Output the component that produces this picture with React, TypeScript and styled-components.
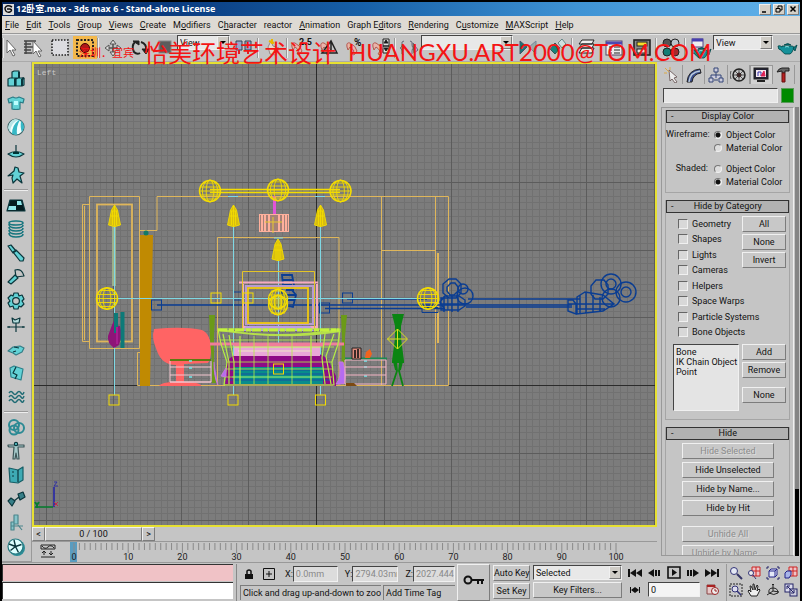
import React from 'react';
import styled, { createGlobalStyle, css } from 'styled-components';

const face = '#c5c5c5';
const dark = '#7c7c7c';
const light = '#f0f0f0';

const GlobalStyle = createGlobalStyle`
  * { box-sizing: border-box; }
  body { margin: 0; background: ${face}; }
  body, button, input, select {
    font-family: Roboto, "Liberation Sans", "Noto Sans CJK SC", sans-serif;
    font-size: 9px;
    line-height: 12px;
    color: #111;
  }
`;

const raised = css`
  border: 1px solid;
  border-color: ${light} ${dark} ${dark} ${light};
`;
const sunken = css`
  border: 1px solid;
  border-color: #444 ${light} ${light} #444;
`;

const Page = styled.div`
  position: relative;
  display: flex;
  flex-direction: column;
  min-height: 100vh;
  background: ${face};
  border: solid #000;
  border-width: 2px 2px 0;
  overflow: hidden;
`;
const TitleBar = styled.header`
  display: flex;
  align-items: center;
  gap: 2px;
  height: 14px;
  padding: 0 1px 0 1px;
  background: linear-gradient(90deg, #06265c 0%, #0a3c80 22%, #1760a8 45%, #3f93d4 72%, #62b2ea 100%);
`;
const Title = styled.h1`
  flex: 1;
  margin: 0;
  font: bold 9px/14px "Noto Sans", "Open Sans", "Noto Sans CJK SC", sans-serif;
  color: #fff;
  white-space: nowrap;
`;
const CaptionButton = styled.button`
  ${raised}
  width: 12px;
  height: 11px;
  padding: 0;
  display: grid;
  place-items: center;
  background: #d4d0c8;
`;
const MenuBar = styled.nav`
  display: flex;
  align-items: center;
  height: 17px;
  padding-left: 3px;
  gap: 7px;
  background: #dedad4;
`;
const MenuItem = styled.button`
  border: 0;
  padding: 0;
  background: none;
  white-space: nowrap;
  u { text-underline-offset: 1px; }
`;
const ToolBar = styled.div`
  display: flex;
  align-items: center;
  height: 29px;
  border-top: 1px solid #999;
  border-bottom: 1px solid #aaa;
  box-shadow: inset 0 1px #e4e4e4;
`;
const Tool = styled.button<{ $w?: number; $on?: boolean }>`
  flex: none;
  width: ${p => p.$w ?? 27}px;
  height: 23px;
  padding: 0;
  border: 0;
  display: grid;
  place-items: center;
  background: ${p => (p.$on ? '#f3b84c' : 'none')};
  svg { display: block; overflow: visible; }
`;
const Rule = styled.span<{ $wide?: boolean }>`
  flex: none;
  width: ${p => (p.$wide ? 'auto' : '2px')};
  height: ${p => (p.$wide ? '2px' : '20px')};
  margin: ${p => (p.$wide ? '2px 2px' : '0')};
  border: solid #999;
  border-width: ${p => (p.$wide ? '1px 0 0' : '0 0 0 1px')};
  box-shadow: ${p => (p.$wide ? 'inset 0 1px #eee' : 'inset 1px 0 #eee')};
`;
const Drop = styled.span<{ $w: number }>`
  position: relative;
  flex: none;
  display: block;
  width: ${p => p.$w}px;
  select {
    ${sunken}
    display: block;
    appearance: none;
    width: 100%;
    height: 15px;
    padding: 0 14px 0 2px;
    border-radius: 0;
    background: #e8e8e8;
  }
  svg {
    ${raised}
    position: absolute;
    right: 1px;
    top: 1px;
    width: 12px;
    height: 13px;
    background: #cfccc6;
    pointer-events: none;
  }
`;
const ToolDrop = styled(Drop)`
  align-self: flex-start;
  margin-top: 1px;
`;
const Spacer = styled.span`flex: 1;`;
const Body = styled.div`
  flex: 1;
  min-height: 0;
  display: grid;
  grid-template-columns: 30px minmax(0, 1fr) 143px;
`;
const SideTools = styled.aside`
  display: flex;
  flex-direction: column;
  padding: 5px 1px 0 0;
  border: solid #999;
  border-width: 0 1px 1px 0;
`;
const SideTool = styled.button`
  height: 24px;
  border: 0;
  padding: 0;
  background: none;
  display: grid;
  place-items: center;
`;
const Center = styled.main`
  display: flex;
  flex-direction: column;
  min-width: 0;
`;
const Viewport = styled.section`
  position: relative;
  flex: 1;
  min-height: 0;
  border: 2px solid #e6e032;
  background: #7c7c7c;
  svg { display: block; width: 100%; height: 461px; min-height: 100%; }
`;
const ViewLabel = styled.span`
  position: absolute;
  left: 3px;
  top: 3px;
  font: 8px/11px "Liberation Mono", monospace;
  color: #c9c9c9;
`;
const TimeSlider = styled.div`
  display: flex;
  height: 15px;
  border-bottom: 1px solid #999;
`;
const SliderButton = styled.button<{ $w: number }>`
  ${raised}
  width: ${p => p.$w}px;
  padding: 0;
  background: ${face};
`;
const Track = styled.div`
  display: flex;
  height: 20px;
  padding-right: 41px;
`;
const TrackIcon = styled.button`
  flex: none;
  width: 42px;
  padding: 0 10px 0 0;
  border: 0;
  background: none;
`;
const Ticks = styled.svg`
  flex: 1;
  min-width: 0;
  height: 20px;
  overflow: visible;
  text { font-size: 9px; text-anchor: middle; fill: #222; }
`;

const CommandPanel = styled.aside`
  display: flex;
  flex-direction: column;
  padding: 3px 1px 0 4px;
  min-height: 0;
`;
const Tabs = styled.div`
  display: flex;
  height: 19px;
  padding-right: 4px;
`;
const Tab = styled.button<{ $on?: boolean }>`
  flex: 1;
  padding: 0;
  border: solid #999;
  border-width: ${p => (p.$on ? '1px 1px 0' : '0 1px 0 0')};
  background: ${p => (p.$on ? '#d2d2d2' : 'none')};
  display: grid;
  place-items: center;
`;
const NameRow = styled.div`
  display: flex;
  gap: 3px;
  padding: 4px 5px 4px 2px;
  input { ${sunken} flex: 1; min-width: 0; height: 15px; background: #e6e6e6; }
`;
const Swatch = styled.button`
  width: 13px;
  height: 15px;
  padding: 0;
  border: 1px solid #5a9a5a;
  background: #008a00;
`;
const Scroller = styled.div`
  display: flex;
  gap: 1px;
  height: 449px;
  overflow: hidden;
`;
const Rollouts = styled.div`
  flex: 1;
  padding: 2px 3px 0;
  border: solid #999;
  border-width: 1px;
  border-right-color: ${light};
  overflow: hidden;
`;
const Thumb = styled.div`
  width: 4px;
  background: linear-gradient(#858585 0 85%, #000 85%);
`;
const Rollout = styled.section<{ $h: number }>`
  min-height: ${p => p.$h}px;
  margin-bottom: 7px;
  border: solid #a5a5a5;
  border-width: 0 1px 1px;
`;
const RolloutTitle = styled.button`
  display: flex;
  width: 100%;
  height: 13px;
  padding: 0 4px;
  border: 1px solid #333;
  background: #b2b2b2;
  line-height: 11px;
  b { flex: 1; font-weight: normal; padding-right: 2px; }
`;
const RadioGroup = styled.fieldset`
  display: grid;
  grid-template-columns: 42px 1fr;
  column-gap: 6px;
  margin: 0;
  padding: 5px 0 0;
  border: 0;
  & + & { padding-top: 8px; }
  > span { text-align: right; line-height: 13px; }
  > div { display: grid; }
`;
const Option = styled.label`
  display: flex;
  align-items: center;
  gap: 4px;
  height: 13px;
  white-space: nowrap;
  input {
    appearance: none;
    flex: none;
    width: 8px;
    height: 8px;
    margin: 0;
    border-radius: 50%;
    ${sunken}
    border-color: #777 ${light} ${light} #777;
    background: #ddd;
  }
  input:checked { background: radial-gradient(#111 0 2px, #ddd 3px); }
`;
const Split = styled.div`
  display: flex;
  justify-content: space-between;
  padding: 3px 3px 0 12px;
`;
const Checks = styled.div`
  display: flex;
  flex-direction: column;
  justify-content: space-between;
  height: 122px;
  padding-top: 2px;
`;
const Check = styled.label`
  display: flex;
  align-items: center;
  gap: 4px;
  height: 12px;
  white-space: nowrap;
  input {
    appearance: none;
    width: 10px;
    height: 10px;
    margin: 0;
    ${sunken}
    border-color: #666 ${light} ${light} #666;
    background: #d8d8d8;
  }
`;
const SideButtons = styled.div`
  display: flex;
  flex-direction: column;
  gap: 2px;
  width: 44px;
  margin-left: -44px;
`;
const PushButton = styled.button<{ $gapBefore?: number }>`
  ${raised}
  width: 100%;
  height: 16px;
  flex: none;
  padding: 0;
  margin-top: ${p => p.$gapBefore ?? 0}px;
  background: #c8c8c8;
  line-height: 13px;
  white-space: nowrap;
  &:disabled { color: #8c8c8c; text-shadow: 1px 1px #ddd; }
`;
const ListRow = styled.div`
  display: flex;
  justify-content: space-between;
  padding: 6px 3px 0 7px;
`;
const ListBox = styled.ul`
  ${sunken}
  width: 66px;
  height: 67px;
  margin: 0;
  padding: 2px 0 0 2px;
  list-style: none;
  line-height: 10px;
  background: #e4e4e4;
  white-space: nowrap;
`;
const HideButtons = styled.div`
  display: flex;
  flex-direction: column;
  gap: 3px;
  padding: 3px 15px 0 16px;
`;

const Bottom = styled.footer`
  display: flex;
  height: 39px;
  padding: 1px 0 0;
  gap: 3px;
  border-top: 1px solid #999;
`;
const Listener = styled.div`
  flex: 1;
  min-width: 100px;
  display: grid;
  grid-template-rows: 17px 17px;
  gap: 1px;
  padding-right: 3px;
  border-right: 1px solid #888;
`;
const ListenerLine = styled.input<{ $bg: string }>`
  border: solid #333;
  border-width: 1px 0 0 1px;
  width: 100%;
  min-width: 0;
  background: ${p => p.$bg};
`;
const Status = styled.div`
  width: 214px;
  display: grid;
  grid-template-rows: 19px 16px;
  gap: 1px;
`;
const StatusRow = styled.div`
  display: flex;
  align-items: center;
  gap: 2px;
`;
const Coord = styled.label<{ $w: number }>`
  display: flex;
  align-items: center;
  margin-left: auto;
  input { ${sunken} width: ${p => p.$w}px; height: 16px; padding: 0 0 0 2px; background: #dcdcdc; color: #888; }
`;
const StatusCell = styled.div<{ $w?: number }>`
  flex: ${p => (p.$w ? 'none' : '1')};
  width: ${p => (p.$w ? p.$w + 'px' : 'auto')};
  height: 15px;
  padding-left: 2px;
  border: solid ${dark};
  border-width: 1px 0 0 1px;
  overflow: hidden;
  white-space: nowrap;
  line-height: 15px;
`;
const KeyButton = styled.button`
  ${raised}
  width: 33px;
  padding: 0;
  background: ${face};
`;
const KeyCol = styled.div<{ $w: number }>`
  width: ${p => p.$w}px;
  display: flex;
  flex-direction: column;
  gap: 2px;
  padding-top: 1px;
`;
const Playback = styled.div`
  width: 98px;
  display: grid;
  grid-template-rows: 17px 17px;
  padding: 0 4px 0 3px;
`;
const PlayRow = styled.div`
  display: flex;
  align-items: center;
  justify-content: space-between;
  input { ${sunken} width: 52px; height: 15px; background: #f4f4f4; }
`;
const NavGrid = styled.div`
  width: 74px;
  display: grid;
  grid-template-columns: repeat(4, 1fr);
  grid-template-rows: 17px 17px;
  border-left: 1px solid #999;
`;
const IconButton = styled.button`
  border: 0;
  padding: 0;
  background: none;
  display: grid;
  place-items: center;
`;
const Watermark = styled.div`
  position: absolute;
  left: 77px;
  top: 36px;
  display: flex;
  align-items: center;
  color: #f41414;
  white-space: nowrap;
  pointer-events: none;
  font: 24px/28px "Noto Sans CJK SC", sans-serif;
  small { width: 65px; font-size: 11px; }
  span { width: 204px; }
  em { font: 24px/26px Lato, "Liberation Sans", sans-serif; }
`;

/* ---------- icons ---------- */
const C = '#62d2d6';
const K = '#0b363c';
const Ico = ({ children, s = 20, w }: { children: React.ReactNode; s?: number; w?: number }) => (
  <svg width={w ?? s} height={s} viewBox={`0 0 ${w ?? s} ${s}`} fill="none" stroke="#222" strokeWidth="1" aria-hidden="true">{children}</svg>
);
const Teal = ({ children }: { children: React.ReactNode }) => (
  <svg width="20" height="20" viewBox="0 0 20 20" fill={C} stroke={K} strokeWidth="1.2" strokeLinejoin="round" aria-hidden="true">{children}</svg>
);

const sideGroups: [string, React.ReactNode][][] = [
  [
    ['Rigid bodies', <Teal><path d="M6 3l2-1h5v7H6zM2 10l2-1h5v8H2zM10 10l2-1h6v7l-2 1h-6z" /><path d="M13 3v6M9 10v7M16 10l2-1M16 10v7" strokeWidth="2" /></Teal>],
    ['Cloth', <Teal><path d="M2 6l5-2q3 2 6 0l5 2-1 4-3-1v7q-4 1-8 0V9l-3 1z" stroke="#2a7c86" /><path d="M8 8h4v4H8z" fill="#bff" stroke="none" /></Teal>],
    ['Soft body', <Teal><circle cx="10" cy="10" r="8" fill="#f2ffff" stroke="#3a6468" /><path d="M13 3Q5 5 4 15l-2-4Q3 4 9 2z" fill="#b8e4e6" stroke="none" /><path d="M13 3Q6 8 6 17l5 1Q10 9 14 3zM15 4q-1 7 1 11l2-4q0-5-3-7z" fill="#36b8c6" stroke="none" /></Teal>],
    ['Rope', <Teal><path d="M2 13q8-5 16 0-8 6-16 0zM10 4v8" /><path d="M7 12h6" stroke="#033" strokeWidth="2" /></Teal>],
    ['Deforming mesh', <Teal><path d="M9 2l3 1 1 4 5 1-4 3 2 7-5-4-4 4-1-5 1-3-5 1 6-5z" /></Teal>],
  ],
  [
    ['Plane', <Teal><path d="M4 5h12l3 11H1z" fill="#041c20" /><path d="M11 6h4l1 4h-5zM3 11h7v4H2z" stroke="none" fill="#8fe6ea" /></Teal>],
    ['Spring', <Teal><g fill="none" stroke="#16757e" strokeWidth="1.6"><ellipse cx="10" cy="4" rx="7" ry="2" /><path d="M3 5q0 4 7 4t7-3M3 8q0 4 7 4t7-3M3 11q0 4 7 4t7-3M3 14q0 4 7 4t7-3" /></g></Teal>],
    ['Linear dashpot', <Teal><path d="M2 3l3-1 5 6-3 2zM7 9l3-2 8 8-1 3-3 0z" /></Teal>],
    ['Angular dashpot', <Teal><path d="M9 3q7-2 9 6l-8 1z" fill="none" /><path d="M2 15l7-7 3 3-7 6z" /></Teal>],
    ['Motor', <Teal><path d="M8 2h4l1 3 3-1 2 4-2 2 2 3-3 3-2-1-1 3H8l-1-3-3 1-2-4 2-2-2-3 3-3 2 1z" /><circle cx="10" cy="10" r="3.4" fill="#c5c5c5" /></Teal>],
    ['Wind', <Teal><path d="M1 12h18M10 8v9M3 11v2M17 11v2" fill="none" /><path d="M6 3l3 2 5-2-1 5H7z" fill="#b4dcdc" /></Teal>],
    ['Toy car', <Teal><path d="M2 12l5-4 7-1 4 2-2 4-6 3-3-2z" stroke="#357d86" /><path d="M8 8l5 1M7 13l3-1" /></Teal>],
    ['Fracture', <Teal><path d="M4 5l4-2 9 3-2 11-10-3z" stroke="#2c808a" /><path d="M10 4l-3 6 4 2-2 4" fill="none" /></Teal>],
    ['Water', <Teal><path d="M3 6q2-3 4 0t4 0 4 0 3-1M3 10q2-3 4 0t4 0 4 0 3-1M3 14q2-3 4 0t4 0 4 0 3-1" fill="none" stroke="#1f6b74" strokeWidth="1.4" /></Teal>],
  ],
  [
    ['Constraint', <Teal><g fill="none" stroke="#2c8a94" strokeWidth="2"><circle cx="8" cy="8" r="5" /><circle cx="13" cy="11" r="5" /><circle cx="8" cy="13" r="4.5" /></g></Teal>],
    ['Rag doll', <Teal><path d="M2 5V4h16v2h-6l1 12h-2l-1-6-1 6H7L8 6H3z" fill="#a4c8c8" stroke="#3d5558" /><circle cx="10" cy="3" r="1.6" /></Teal>],
    ['Hinge', <Teal><path d="M3 3l9 2 5-3v13l-5 3-8-1z" fill="#3eaab4" stroke="#175e66" /><path d="M12 5v12M6 7h2M6 11h2" /></Teal>],
    ['Point-point', <Teal><path d="M2 12l3-3 4 3-3 5zM12 5l5-2 2 5-5 3zM8 12l5-4" fill="#377f88" /></Teal>],
    ['Prismatic', <Teal><path d="M8 2h4v9H8zM5 9h3v8H5zM5 13h12M12 12l4 5" fill="#87c4ca" stroke="#4c868c" /></Teal>],
    ['Car wheel', <Teal><circle cx="11" cy="11" r="8" stroke="none" fill="#2a8c96" /><circle cx="9.500" cy="9.500" r="7.500" fill="#dff" stroke="#2a7a82" /><path d="M9.500 9.500L8 3M9.500 9.500l6-2M9.500 9.500l3 6M9.500 9.500l-5 4M9.500 9.500L3 7" strokeWidth="1.400" /></Teal>],
  ],
];

const Cursor = ({ x = 0, fill = '#fff' }: { x?: number; fill?: string }) => <path transform={`translate(${x} 0)`} d="M1 2v13l3-3 3 6 2-1-3-5h4z" fill={fill} stroke="#666" />;
const Magnet = () => <path d="M2 9q-1-5 3-4 6 3 7 8l-3 4-2-1 2-3q-2-3-4-4l-2 3z" fill="#e9b4ac" stroke="#b45a50" />;
const Pot = ({ y = 0, x = 0 }: { y?: number; x?: number }) => (
  <g transform={`translate(${x} ${y})`} stroke="#044" strokeWidth="0.8">
    <path d="M4 6h10q4 1 1 4-1 3-3 4H7Q4 12 3 10q-3 0-3-4 2-1 4 1z" fill="#16919a" /><path d="M15 8l4-3-2 6zM6 5q4-3 7 0z" fill="#0d7a84" /><path d="M7 7q2-1 4 0" stroke="#aff" />
  </g>
);
const Arrow = () => <svg viewBox="0 0 10 11"><path d="M2 4h6L5 7z" fill="#000" /></svg>;

/* ---------- viewport drawing ---------- */
const Y = '#f4dc00';
const TAN = '#dfb65a';
const BLUE = '#0a3d92';
const minorX = Array.from({ length: 140 }, (_, i) => i - 60);
const minorY = Array.from({ length: 90 }, (_, i) => i - 55);

const Ball = ({ x, y, r = 11 }: { x: number; y: number; r?: number }) => (
  <g stroke={Y} fill="none" strokeWidth="0.9">
    <circle cx={x} cy={y} r={r - 0.5} strokeWidth="1.5" />
    <ellipse cx={x} cy={y} rx={r * 0.35} ry={r} /><ellipse cx={x} cy={y} rx={r * 0.7} ry={r} />
    <path d={`M${x - r} ${y}h${2 * r}M${x - r + 1} ${y - 4}h${2 * r - 2}M${x - r + 1} ${y + 4}h${2 * r - 2}M${x - 7} ${y - 8}h14M${x - 7} ${y + 8}h14`} />
  </g>
);
const Cone = ({ x, y }: { x: number; y: number }) => (
  <path d={`M${x} ${y}l-3 5-3 15q6 3 12 0l-3-15zM${x} ${y}v22M${x - 3} ${y + 6}h6M${x - 4} ${y + 11}h8M${x - 2} ${y + 6}v14M${x + 2} ${y + 6}v14`} fill="#d8bd10" stroke={Y} strokeWidth="0.9" />
);
const Box = ({ x, y, c = Y, s = 5 }: { x: number; y: number; c?: string; s?: number }) => <rect x={x - s} y={y - s} width={2 * s} height={2 * s} fill="none" stroke={c} />;

const Scene = () => (
  <svg viewBox="34 64 621 461" preserveAspectRatio="xMidYMid slice" fill="none" role="img" aria-label="Left wireframe view of a bedroom">
    <g stroke="#717171" shapeRendering="crispEdges">
      {minorX.map(i => <path key={i} d={`M${316.5 + i * 6.76} -100v900`} />)}
      {minorY.map(i => <path key={i} d={`M-100 ${385.5 + i * 6.76}h1100`} />)}
    </g>
    <g stroke="#5c5c5c" shapeRendering="crispEdges">
      {[-6, -5, -4, -3, -2, -1, 1, 2, 3, 4, 5, 6, 7].map(i => <path key={i} d={`M${316.5 + i * 67.6} -100v900`} />)}
      {[-6, -5, -4, -3, -2, -1, 1, 2, 3].map(i => <path key={i} d={`M-100 ${385.5 + i * 67.6}h1100`} />)}
    </g>
    <path d="M316.500-100v900M-100 385.500h1100" stroke="#2b2b2b" shapeRendering="crispEdges" />

    <g stroke={TAN}>
      <path d="M89.500 348.500v-152h50v152zM89.500 204.500h-7v137h7M84.500 206v134" />
      <rect x="97" y="204.500" width="35" height="137" strokeWidth="1.800" />
      <path d="M139.500 230.500h17.500v-34h291.500v189h-311v-33h3M381.500 196.500v189M435.500 196.500v189M381.500 250.500h54" />
      <path d="M438 253v90" strokeWidth="2" />
      <path d="M217.500 385v-147.500h121.500v148" />
    </g>
    <path d="M238.500 328v-88.500h77" stroke="#666" />
    <path d="M140 235h13l-3 151h-10z" fill="#c08a02" />
    <circle cx="146" cy="233" r="2.500" fill="#137a66" />
    <path d="M112 226h4v60h-4z" fill="#9db08a" />

    <g stroke={BLUE}>
      <path d="M157 305h415M347 299h80M468 299h112M325 308.500h120M466 307h106" strokeWidth="1.600" />
      <Box x={156.500} y={305} c={BLUE} /><Box x={324.500} y={308} c={BLUE} /><Box x={347.500} y={298} c={BLUE} />
      <path d="M422 307.500h16v5h-16zM233 292h8M233 300h8" />
      <path d="M282 275h10l2 10-3 4 5 6-3 12-8-2-4-14 2-6zM282 280h11M284 285h8M286 290h8M284 295h12M285 300h10" strokeWidth="1.800" />
      <g strokeWidth="1.400">
        <path d="M449 279h7l5 5v9l-5 5h-7l-6-5v-9zM451 283h4l3 4v4l-4 4h-4l-3-4v-4z" />
        <circle cx="465" cy="296" r="8" /><circle cx="463" cy="289" r="5" />
        <path d="M440 302l5-6h14l6 4v6l-6 4h-14zM441 298h7v12h-7zM444 296v16M452 296v16M458 297v15M440 304h26" />
      </g>
      <g strokeWidth="1.400">
        <path d="M591 286l5-6h8l4 5v9l-5 5h-8l-4-5z" /><circle cx="611" cy="284" r="10" /><circle cx="611" cy="284" r="5" /><circle cx="626" cy="292" r="10" /><circle cx="626" cy="292" r="5" /><circle cx="611" cy="298" r="9" />
        <path d="M568 300h5l3 4v10l-8-3zM577 297l8-5 18 3 11 9-11 7-26 3zM580 295v19M586 293v20M593 295v17M600 297v14M568 304h46M577 309h28" />
      </g>
    </g>
    <path d="M107 298.500h321M114.500 226v169M233.500 226v169M320.500 226v169M278.500 261v108M228 196.500h10M315 196.500h10M274 238h9" stroke="#7fd8e4" />

    <path d="M112 325q2-3 3-9l1 9 4 1 2 9-3 10-5 3q-7-5-6-12z" fill="#8e1478" />
    <path d="M116 313v20M122.500 312v36" stroke="#0c7a78" strokeWidth="4" />
    <path d="M117 327v17" stroke="#a81c90" strokeWidth="2" />
    <path d="M154 329q30-3 48 1 9 4 9 20 0 9-3 13l-24 1v18q14 0 17 3v1h-42q2-4 17-4v-17q-14 0-19-14-6-14-3-21z" fill="#ff6464" />
    <path d="M170 360h41" stroke="#5f7a10" strokeWidth="2" />
    <path d="M170 361v21h41v-21M170 367h41M170 375h41M170 382h41" stroke="#f3c6cf" />
    <g stroke="#6ee6ea" strokeWidth="1.500"><path d="M189 361h3M189 368h3M189 377h3M364 361h3M364 367h3M364 376h3" /></g>
    <path d="M209 315h6l-1 22v28l2 18h-4v-20l-2-24zM341 315h6l-2 22v28l-1 20h-3l1-46z" fill="#6b9a18" />

    <g stroke="#f4aabf">
      <path d="M239 282.500h79M243 284v44h74v-44M242 327h76" strokeWidth="2" /><path d="M246 286v38h67v-38z" stroke="#b79bd0" strokeWidth="2" />
    </g>
    <path d="M242.500 330v-58.500h72v58" stroke="#e4c428" />
    <rect x="248" y="288" width="60" height="35" stroke="#f0c810" strokeWidth="1.800" />
    <path d="M246 326h64l4 5h-72z" fill="#bd9de8" />

    <path d="M227 362q4-7 12-8h80q8 2 11 10l6 12v10H225z" fill="#8e0a86" />
    <path d="M234 343h86v13h-86z" fill="#e9a7d8" /><path d="M234 347h86M238 351h74" stroke="#f0e8c8" />
    <path d="M210 344h134M234 345h90" stroke="#f07d9b" strokeWidth="3" />
    <path d="M234 367h89v17h-89z" fill="#088c8c" /><path d="M231 370h94M233 374h90M228 380h102" stroke="#1b4fa0" /><path d="M232 377h90" stroke="#26c4b4" />
    <path d="M222 329q55 10 116 0l3 3q-56 9-122-1z" fill="#b6e04a" />
    <g stroke="#b4ee44">
      <path d="M218 329h122l-2 15-6 18 2 23H224l3-23-6-18zM223 334l6 28v22M229 335l5 27v22M240 336v48M311 336v48M325 334l-3 24 3 26M334 334l-8 22 5 28" strokeWidth="1.200" />
      <path d="M220 340h118M222 347h112M226 362h106M225 369h107M225 377h107M225 385h108M254 336v48M268 336v48M292 336v48" strokeWidth="0.800" />
    </g>
    <path d="M218 330h121" stroke="#c4f23c" strokeWidth="3" strokeDasharray="9 2 5 1" />
    <path d="M336 384q6-6 3-22h4q4 14 1 22zM221 376l5-8v9zM214 362q0 16 4 23" fill="#b56cf0" stroke="#c87ad8" />

    <path d="M345 358.500h42" stroke="#1b8a50" strokeWidth="2" /><path d="M345 360v24h41v-24zM345 367h41M345 375h41" stroke="#f3b4c4" />
    <path d="M352 348h9v11h-9z" fill="#e08b7c" stroke="#222" /><path d="M355 350v8M358 349v9" stroke="#111" strokeWidth="1.600" />
    <path d="M365 358l1-6 4-3 2 5-2 4z" fill="#f0641e" /><path d="M346 383h8l3 3h-11z" fill="#7c4a12" />
    <path d="M392 314h12l-3 12v12l3 23v2h-12v-2l3-23v-12z" fill="#0a8512" />
    <path d="M396 362l1 9-5 15M400 362l-1 9 4 15M394 362l2 8M402 362l-2 8" stroke="#0a8512" strokeWidth="1.800" />
    <path d="M397.500 329l10 10-10 10-10-10zM387 339h20M397.500 329v20" stroke="#dce01e" />

    <path d="M274.500 196v18" stroke="#e254d8" strokeWidth="3" />
    <rect x="259.500" y="214.500" width="29" height="17" fill="#a58178" stroke="#ffb09c" />
    <path d="M262 214v18M265 214v18M269 214v18M279 214v18M283 214v18M286 214v18" stroke="#ffb09c" strokeWidth="2" /><path d="M265 222h17M273 217v16" stroke="#e7c830" />

    <path d="M210 189.500h130M210 192.500h130" stroke={Y} strokeWidth="1.600" />
    <Ball x={210} y={191} /><Ball x={278} y={190} /><Ball x={340.500} y={191} />
    <Ball x={107} y={298.500} /><Ball x={278} y={299} r={10} /><Ball x={278} y={305} r={10} /><Ball x={428} y={298.500} />
    <Cone x={114.500} y={205} /><Cone x={233.500} y={205} /><Cone x={320.500} y={205} /><Cone x={278} y={239} />
    <Box x={114} y={400} /><Box x={233} y={400} /><Box x={320.500} y={400} />
    <Box x={216} y={298} /><Box x={248} y={298} /><Box x={278.500} y={369} />

    <path d="M54 487v20" stroke="#2626a8" strokeWidth="1.600" /><path d="M54 482h3l-3 4h4" stroke="#3232a0" />
    <path d="M35 507h18" stroke="#087c30" strokeWidth="1.600" /><path d="M35 502l2 3 2-3M37 505v3" stroke="#087c30" strokeWidth="2" />
    <path d="M54 502l4 4M58 502l-4 4" stroke="#c2284a" />
  </svg>
);

/* The underscore marks the access key that follows it. */
const menus = ['_File', '_Edit', '_Tools', '_Group', '_Views', '_Create', 'M_odifiers', 'C_haracter', 'reactor', '_Animation', 'Graph E_ditors', '_Rendering', 'C_ustomize', '_MAXScript', '_Help'];
const MenuText = ({ text }: { text: string }) => {
  const at = text.indexOf('_');
  return at < 0 ? <>{text}</> : <>{text.slice(0, at)}<u>{text[at + 1]}</u>{text.slice(at + 2)}</>;
};
const categories = ['Geometry', 'Shapes', 'Lights', 'Cameras', 'Helpers', 'Space Warps', 'Particle Systems', 'Bone Objects'];

const Radios = ({ label, selected }: { label: string; selected: number }) => (
  <RadioGroup aria-label={label}>
    <span>{label}:</span>
    <div>
      {['Object Color', 'Material Color'].map((o, i) => (
        <Option key={o}><input type="radio" name={label} defaultChecked={i === selected} />{o}</Option>
      ))}
    </div>
  </RadioGroup>
);
const Heading = ({ children }: { children: string }) => <RolloutTitle><span>-</span><b>{children}</b></RolloutTitle>;

export default function App() {
  return (
    <Page>
      <GlobalStyle />
      <TitleBar>
        <svg width="11" height="11" viewBox="0 0 11 11" fill="none"><rect width="11" height="11" fill="#ddd" /><path d="M9 3q-5-3-7 1 0 5 5 4 3-2 0-3H4" stroke="#111" strokeWidth="1.500" /></svg>
        <Title>12卧室.max - 3ds max 6 - Stand-alone License</Title>
        <CaptionButton aria-label="Minimize"><svg width="8" height="7"><path d="M1 6h4" stroke="#000" strokeWidth="1.500" /></svg></CaptionButton>
        <CaptionButton aria-label="Restore"><svg width="8" height="8" fill="none" stroke="#000"><path d="M3 3V1h4v4H5M1 3.500h4V7H1z" /></svg></CaptionButton>
        <CaptionButton aria-label="Close"><svg width="8" height="8" stroke="#000" strokeWidth="1.500"><path d="M1.500 1.500l5 5M6.500 1.500l-5 5" /></svg></CaptionButton>
      </TitleBar>
      <MenuBar>{menus.map(m => <MenuItem key={m}><MenuText text={m} /></MenuItem>)}</MenuBar>

      <ToolBar>
        <Rule />
        <Tool $w={15} aria-label="Select"><Ico w={12}><Cursor /></Ico></Tool>
        <Tool aria-label="Select by name"><Ico><path d="M1 3h12M1 6h7M1 9h9M1 12h7M1 15h8M3 3v13" stroke="#444" strokeWidth="1.400" /><g transform="translate(7 1)"><Cursor x={2} /></g></Ico></Tool>
        <Tool aria-label="Selection region"><Ico><rect x="2" y="2" width="16" height="15" fill="#dcdce0" strokeWidth="1.600" strokeDasharray="1.500 1.500" /></Ico></Tool>
        <Tool $w={24} $on aria-label="Window crossing"><Ico><rect x="2" y="2" width="16" height="16" strokeWidth="2" strokeDasharray="2 1.500" /><circle cx="10" cy="10" r="4.500" fill="#b01818" stroke="#400" /></Ico></Tool>
        <Rule />
        <Tool aria-label="Move"><Ico><g transform="translate(2 2)"><path d="M8 1v14M1 8h14" stroke="#555" strokeWidth="1.600" /><path d="M8 0l3 4H5zM8 16l3-4H5zM0 8l4-3v6zM16 8l-4-3v6z" fill="#ddd" stroke="#555" /></g></Ico></Tool>
        <Tool $w={26} aria-label="Rotate"><Ico><path d="M6 4Q2 8 5 14q3 3 6 1M12 4q6 2 5 8" strokeWidth="2" /><path d="M4 3h6v4zM13 11h7l-3 5z" fill="#222" /></Ico></Tool>
        <Tool $w={25} aria-label="Scale"><Ico><rect x="4" y="3" width="12" height="12" fill="#5c5c5c" stroke="#888" /></Ico></Tool>
        <ToolDrop $w={53}><select aria-label="Reference coordinate system"><option>View</option></select><Arrow /></ToolDrop>
        <Tool aria-label="Use pivot"><Ico><path d="M2 3h6v9H2zM11 3h6v9h-6z" fill="#98a4cc" stroke="#345" /><path d="M5 12v4M14 12v4" stroke="#d22" strokeWidth="2" /></Ico></Tool>
        <Rule />
        <Tool aria-label="Manipulate"><Ico><path d="M5 9l3-6 2 5 6 2-3 7-6-1z" fill="#e7d9c8" stroke="#988" /><path d="M9 1v5M6 3l5 2" stroke="#e8b800" strokeWidth="2" /></Ico></Tool>
        <Rule />
        <Tool $w={28} aria-label="Snap 2.5"><Ico w={24}><Magnet /><text x="9" y="7" fontSize="9" fontWeight="bold" fill="#111" stroke="none">2.5</text></Ico></Tool>
        <Tool $w={26} aria-label="Angle snap"><Ico><Magnet /><path d="M3 15L12 3l6 12zM12 3v9" strokeWidth="1.500" /></Ico></Tool>
        <Tool $w={26} aria-label="Percent snap"><Ico><Magnet /><text x="9" y="8" fontSize="10" fontWeight="bold" fill="#111" stroke="none">%</text></Ico></Tool>
        <Tool $w={26} aria-label="Spinner snap"><Ico><Magnet /><path d="M12 1h6v7h-6zM12 8h6v7h-6z" fill="#ddd" /><path d="M13 5h4l-2-3zM13 10h4l-2 3z" fill="#111" /></Ico></Tool>
        <Rule />
        <Tool $w={25} aria-label="Named selection sets"><Ico><path d="M5 3Q2 3 3 7q0 3-2 3 2 0 2 3-1 4 2 4M11 3q3 0 2 4 0 3 2 3-2 0-2 3 1 4-2 4" stroke="#667" /><path d="M14 5l5 7-4 3z" fill="#bbc" stroke="#667" /></Ico></Tool>
        <ToolDrop $w={92}><select aria-label="Named selection"><option></option></select><Arrow /></ToolDrop>
        <Tool $w={29} aria-label="Mirror"><Ico><path d="M2 3l7 6-7 7z" fill="#187878" stroke="#456" /><path d="M18 3l-7 6 7 7z" fill="#9aa" stroke="#789" /></Ico></Tool>
        <Tool $w={29} aria-label="Align"><Ico><path d="M3 11l5-6 5 5-5 6z" fill="#17857c" stroke="#355" /><path d="M11 5l4-4 4 5-4 4z" fill="#cfe0e0" stroke="#688" /></Ico></Tool>
        <Rule />
        <Tool aria-label="Layers"><Ico><path d="M5 2h12l-2 4H2zM5 6h12l-2 4H2zM5 10h12l-2 5H2z" fill="#eee" /></Ico></Tool>
        <Tool $w={28} aria-label="Curve editor"><Ico><rect x="2" y="3" width="16" height="14" fill="#eee" stroke="#546" /><path d="M2 5h16" stroke="#4c46b0" strokeWidth="3" /><path d="M5 9h3M10 9h6M5 12h3M10 12h6M5 15h3M10 15h6" /></Ico></Tool>
        <Tool aria-label="Schematic view"><Ico><rect x="2" y="2" width="16" height="15" fill="#8c8c8c" strokeWidth="1.600" /><rect x="5" y="4" width="10" height="4" fill="#f4dc30" /><rect x="5" y="11" width="9" height="4" fill="#e4e4e4" /></Ico></Tool>
        <Rule />
        <Tool $w={27} aria-label="Material editor"><Ico><circle cx="6" cy="5" r="4" fill="#555" /><circle cx="14" cy="5" r="4" fill="#bcc4cc" /><circle cx="6" cy="14" r="4" fill="#127e74" /><circle cx="14" cy="14" r="4" fill="#a8282a" /></Ico></Tool>
        <Rule />
        <Tool aria-label="Render scene"><Ico><rect x="2" y="1" width="11" height="8" fill="#eee" stroke="#548" /><path d="M2 2h11" stroke="#4840b0" strokeWidth="3" /><Pot x={2} y={6} /></Ico></Tool>
        <ToolDrop $w={60}><select aria-label="Render type"><option>View</option></select><Arrow /></ToolDrop>
        <Spacer />
        <Tool $w={24} aria-label="Quick render"><Ico><Pot y={2} /></Ico></Tool>
      </ToolBar>

      <Body>
        <SideTools>
          {sideGroups.map((g, i) => (
            <React.Fragment key={i}>
              {i > 0 && <Rule $wide />}
              {g.map(([name, icon]) => <SideTool key={name} aria-label={name}>{icon}</SideTool>)}
            </React.Fragment>
          ))}
        </SideTools>

        <Center>
          <Viewport><Scene /><ViewLabel>Left</ViewLabel></Viewport>
          <TimeSlider>
            <SliderButton $w={13} aria-label="Previous frame">&lt;</SliderButton>
            <SliderButton $w={97}>0 / 100</SliderButton>
            <SliderButton $w={13} aria-label="Next frame">&gt;</SliderButton>
          </TimeSlider>
          <Track>
            <TrackIcon aria-label="Mini curve editor"><svg width="16" height="14" fill="none" stroke="#222"><path d="M1 1h14v4H1zM2 2q3 4 6 1t6 1M4 7v4M11 7v4M2 9l2-2 2 2M9 9l2 2 2-2M1 13h14" /></svg></TrackIcon>
            <Ticks>
              <rect x="-4" y="0" width="7" height="20" fill="#5a9cc0" />
              {Array.from({ length: 101 }, (_, i) => <line key={i} x1={`${i}%`} x2={`${i}%`} y1="1" y2={i % 10 ? 8 : 11} stroke="#8a8a8a" />)}
              {Array.from({ length: 11 }, (_, i) => <text key={i} x={`${i * 10}%`} y="18">{i * 10}</text>)}
            </Ticks>
          </Track>
        </Center>

        <CommandPanel>
          <Tabs>
            <Tab aria-label="Create"><Ico s={16}><path d="M5 3l8 7-3 1 3 4-2 1-3-4-2 2z" fill="#eee" stroke="#766" /><path d="M1 1l4 4M6 0v3M0 6h3" stroke="#da4" /></Ico></Tab>
            <Tab aria-label="Modify"><Ico s={16}><path d="M1 15Q2 3 14 2l1 4Q7 7 6 15z" fill="#3a4d8c" /><path d="M3 15Q4 5 14 4" stroke="#bcd" strokeWidth="1.500" /></Ico></Tab>
            <Tab aria-label="Hierarchy"><Ico s={16}><path d="M6 1h4v4H6zM1 11h4v4H1zM11 11h4v4h-4zM8 5v6M3 11V8h10v3M6 13h4" fill="#ccd" stroke="#347" /></Ico></Tab>
            <Tab aria-label="Motion"><Ico s={16}><circle cx="9" cy="8" r="6" strokeWidth="1.500" /><circle cx="9" cy="8" r="2" fill="#b33" /><path d="M9 2v12M3 8h12M5 4l8 8M13 4l-8 8M1 4q-2 4 0 8" strokeWidth="0.700" /></Ico></Tab>
            <Tab $on aria-label="Display"><Ico s={16}><rect x="1" y="1" width="14" height="11" fill="#223" /><rect x="3" y="3" width="10" height="7" fill="#f6eaf0" stroke="none" /><path d="M5 9V5h3v4" stroke="#33a" /><path d="M8 9l3-5 1 5z" fill="#d25" stroke="#d25" /><path d="M4 14h8" strokeWidth="2" /></Ico></Tab>
            <Tab aria-label="Utilities"><Ico s={16}><path d="M2 5q2-4 5-4h7v3h-4v2H7V4z" fill="#666" /><path d="M7 6h3v9H7z" fill="#b82020" stroke="#611" /></Ico></Tab>
          </Tabs>
          <NameRow><input aria-label="Object name" /><Swatch aria-label="Object color" /></NameRow>
          <Scroller>
            <Rollouts>
              <Rollout $h={83}>
                <Heading>Display Color</Heading>
                <Radios label="Wireframe" selected={0} />
                <Radios label="Shaded" selected={1} />
              </Rollout>
              <Rollout $h={220}>
                <Heading>Hide by Category</Heading>
                <Split>
                  <Checks>{categories.map(c => <Check key={c}><input type="checkbox" />{c}</Check>)}</Checks>
                  <SideButtons>{['All', 'None', 'Invert'].map(b => <PushButton key={b}>{b}</PushButton>)}</SideButtons>
                </Split>
                <ListRow>
                  <ListBox><li>Bone</li><li>IK Chain Object</li><li>Point</li></ListBox>
                  <SideButtons><PushButton>Add</PushButton><PushButton>Remove</PushButton><PushButton $gapBefore={7}>None</PushButton></SideButtons>
                </ListRow>
              </Rollout>
              <Rollout $h={140}>
                <Heading>Hide</Heading>
                <HideButtons>
                  <PushButton disabled>Hide Selected</PushButton>
                  <PushButton>Hide Unselected</PushButton>
                  <PushButton>Hide by Name...</PushButton>
                  <PushButton>Hide by Hit</PushButton>
                  <PushButton disabled $gapBefore={7}>Unhide All</PushButton>
                  <PushButton disabled>Unhide by Name...</PushButton>
                </HideButtons>
              </Rollout>
            </Rollouts>
            <Thumb />
          </Scroller>
        </CommandPanel>
      </Body>

      <Bottom>
        <Listener>
          <ListenerLine $bg="#f0c2c6" aria-label="Macro recorder" />
          <ListenerLine $bg="#fff" aria-label="Script listener" />
        </Listener>
        <Status>
          <StatusRow>
            <Tool $w={18} aria-label="Selection lock"><svg width="10" height="12"><path d="M3 6V3q2-2 4 0v3" fill="none" stroke="#111" strokeWidth="1.500" /><path d="M1 6h8v5H1z" fill="#111" /></svg></Tool>
            <Tool $w={18} aria-label="Transform type-in"><svg width="12" height="12" fill="none" stroke="#111"><path d="M.500.500h11v11H.500zM3 6h6M6 3v6" /></svg></Tool>
            <Coord $w={45}>X:<input defaultValue="0.0mm" /></Coord>
            <Coord $w={46}>Y:<input defaultValue="2794.03mm" /></Coord>
            <Coord $w={42}>Z:<input defaultValue="2027.444" /></Coord>
          </StatusRow>
          <StatusRow>
            <StatusCell>Click and drag up-and-down to zoo</StatusCell>
            <StatusCell $w={72}>Add Time Tag</StatusCell>
          </StatusRow>
        </Status>
        <KeyButton aria-label="Set keys"><svg width="22" height="12" fill="none" stroke="#111" strokeWidth="2"><circle cx="5" cy="5" r="3.500" /><path d="M8 5h13M15 5v4M19 5v4" /></svg></KeyButton>
        <KeyCol $w={37}><PushButton>Auto Key</PushButton><PushButton>Set Key</PushButton></KeyCol>
        <KeyCol $w={89}>
          <Drop $w={89}><select aria-label="Key mode"><option>Selected</option></select><Arrow /></Drop>
          <PushButton>Key Filters...</PushButton>
        </KeyCol>
        <Playback>
          <PlayRow>
            <IconButton aria-label="Go to start"><svg width="14" height="10" fill="#111"><path d="M0 1h2v8H0zM8 1v8L2 5zM14 1v8L8 5z" /></svg></IconButton>
            <IconButton aria-label="Previous"><svg width="12" height="10" fill="#111"><path d="M6 1v8L0 5zM7 2h2v6H7zM10 2h2v6h-2z" /></svg></IconButton>
            <IconButton aria-label="Play"><svg width="14" height="13"><path d="M1 1h12v11H1z" fill="none" stroke="#111" strokeWidth="1.600" /><path d="M5 3l5 3.500L5 10z" fill="#111" /></svg></IconButton>
            <IconButton aria-label="Next"><svg width="12" height="10" fill="#111"><path d="M0 2h2v6H0zM3 2h2v6H3zM6 1l6 4-6 4z" /></svg></IconButton>
            <IconButton aria-label="Go to end"><svg width="14" height="10" fill="#111"><path d="M12 1h2v8h-2zM0 1l6 4-6 4zM6 1l6 4-6 4z" /></svg></IconButton>
          </PlayRow>
          <PlayRow>
            <IconButton aria-label="Key mode toggle"><svg width="14" height="8" fill="#111"><path d="M2 1h1v6H2zM7 1v6L3 4zM7 1l4 3-4 3zM11 1h1v6h-1z" /></svg></IconButton>
            <input aria-label="Current frame" defaultValue="0" />
            <IconButton aria-label="Time configuration"><svg width="13" height="13" fill="none"><path d="M1 2h8v9H1z" fill="#e8c8c8" stroke="#844" /><path d="M1 3h8" stroke="#a22" strokeWidth="2" /><circle cx="9" cy="8" r="3.500" fill="#eee" stroke="#922" /><path d="M9 6v2h2" stroke="#922" /></svg></IconButton>
          </PlayRow>
        </Playback>
        <NavGrid>
          <IconButton aria-label="Zoom"><Ico s={14}><circle cx="5" cy="5" r="3.500" fill="#e4e8f4" stroke="#337" /><path d="M8 8l5 5" stroke="#336" strokeWidth="2" /></Ico></IconButton>
          <IconButton aria-label="Zoom all"><Ico s={14}><path d="M5 1h8v9H5zM9 1v9M5 5h8" stroke="#c22" fill="#eec4c8" /><circle cx="4" cy="7" r="2.500" fill="#eee" stroke="#337" /><path d="M6 9l3 4" stroke="#337" /></Ico></IconButton>
          <IconButton aria-label="Zoom extents"><Ico s={14}><path d="M3 5l2-2h6v6l-2 2H3zM3 5h6v6M9 5l2-2" fill="#e4e8f8" stroke="#228" /><path d="M1 3V1h2M11 1h2v2M13 11v2h-2M3 13H1v-2" stroke="#226" /></Ico></IconButton>
          <IconButton aria-label="Zoom extents all"><Ico s={14}><path d="M5 1h8v9H5zM9 1v9M5 5h8" stroke="#c22" fill="#eec4c8" /><path d="M1 7l2-2h4v4l-2 3H1z" fill="#a8b4e8" stroke="#228" /></Ico></IconButton>
          <IconButton aria-label="Region zoom"><Ico s={14}><rect x="1" y="1" width="12" height="12" strokeDasharray="2 1" /><circle cx="6" cy="6" r="3" stroke="#337" fill="#dde" /><path d="M8 8l4 4" stroke="#337" strokeWidth="1.600" /></Ico></IconButton>
          <IconButton aria-label="Pan"><Ico s={14}><path d="M4 13L1 8l1-1 2 2-1-6h1l2 4V1h1l1 6 2-5 1 1-1 5 2-2 1 1-3 6z" fill="#eee" /></Ico></IconButton>
          <IconButton aria-label="Arc rotate"><Ico s={14}><path d="M7 1v7l-6 4M7 8l6 1M3 10q-1-5 4-5t5 5q-4 3-9 0M6 2l1-1 1 1" /></Ico></IconButton>
          <IconButton aria-label="Maximize viewport"><Ico s={14}><rect x="1" y="1" width="8" height="8" stroke="#226" fill="#dde" /><rect x="6" y="6" width="7" height="7" stroke="#226" fill="#ccd" /><path d="M3 3l7 7M3 6V3h3M10 7v3H7" stroke="#226" /></Ico></IconButton>
        </NavGrid>
      </Bottom>
      <Watermark><small>深圳．宜宾</small><span>怡美环境艺术设计</span><em>HUANGXU.ART2000@TOM.COM</em></Watermark>
    </Page>
  );
}
